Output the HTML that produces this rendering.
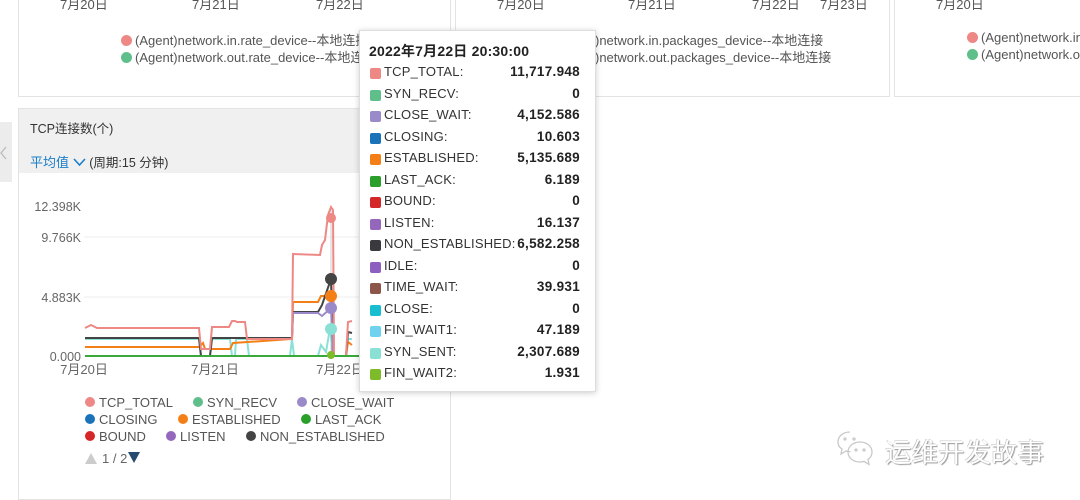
<!DOCTYPE html>
<html><head><meta charset="utf-8"><style>
*{margin:0;padding:0;box-sizing:border-box}
body{width:1080px;height:497px;background:#fff;position:relative;overflow:hidden;font-family:"Liberation Sans","Noto Sans CJK SC",sans-serif;color:#333}
.a{position:absolute;white-space:nowrap}
.panel{position:absolute;border:1px solid #e3e3e3;background:#fff}
.g{color:#555;font-size:13px}
.dot{display:inline-block;width:11px;height:11px;border-radius:50%;vertical-align:-1px;margin-right:3px}
.tt{position:absolute;left:359px;top:30px;width:237px;height:362px;background:#fff;border:1px solid #ddd;box-shadow:0 1px 6px rgba(0,0,0,.2);font-size:13px}
.row{position:absolute;left:10px;right:15px;height:18px}
.row i{position:absolute;left:0;top:5px;width:11px;height:11px;border-radius:2px}
.row span{position:absolute;left:14px;top:1px;color:#333;letter-spacing:0.2px}
.row b{position:absolute;right:0;top:1px;color:#222;font-size:13.5px;letter-spacing:0.3px;line-height:16px}
.row span{line-height:16px}
</style></head><body>
<div class="panel" style="left:18px;top:-2px;width:433px;height:99px"></div>
<div class="panel" style="left:455px;top:-2px;width:435px;height:99px"></div>
<div class="panel" style="left:894px;top:-2px;width:190px;height:99px"></div>
<div class="a g" style="left:60px;top:-6px">7月20日</div>
<div class="a g" style="left:192px;top:-6px">7月21日</div>
<div class="a g" style="left:316px;top:-6px">7月22日</div>
<div class="a g" style="left:497px;top:-6px">7月20日</div>
<div class="a g" style="left:628px;top:-6px">7月21日</div>
<div class="a g" style="left:752px;top:-6px">7月22日</div>
<div class="a g" style="left:820px;top:-6px">7月23日</div>
<div class="a g" style="left:936px;top:-6px">7月20日</div>
<div class="a g" style="left:121px;top:30px"><span class="dot" style="background:#ee8885"></span>(Agent)network.in.rate_device--本地连接</div>
<div class="a g" style="left:121px;top:47px"><span class="dot" style="background:#5fbf8a"></span>(Agent)network.out.rate_device--本地连接</div>
<div class="a g" style="left:595px;top:30px">)network.in.packages_device--本地连接</div>
<div class="a g" style="left:595px;top:47px">)network.out.packages_device--本地连接</div>
<div class="a g" style="left:967px;top:30px"><span class="dot" style="background:#ee8885"></span>(Agent)network.in</div>
<div class="a g" style="left:967px;top:47px"><span class="dot" style="background:#5fbf8a"></span>(Agent)network.out</div>

<div style="position:absolute;left:0;top:122px;width:12px;height:60px;background:#ececec"></div>
<svg style="position:absolute;left:0;top:146px" width="8" height="14"><path d="M6 1L1 7l5 6" stroke="#bbb" stroke-width="1.3" fill="none"/></svg>
<div class="panel" style="left:18px;top:108px;width:433px;height:392px"></div>
<div style="position:absolute;left:19px;top:109px;width:431px;height:64px;background:#f0f0f0"></div>
<div class="a" style="left:30px;top:118px;font-size:12.5px;color:#333">TCP连接数(个)</div>
<div class="a" style="left:30px;top:152px;font-size:13px;color:#1a7dc8">平均值 <svg width="13" height="9" viewBox="0 0 13 9"><path d="M1 1l5.5 6 5.5-6" stroke="#1a7dc8" stroke-width="1.6" fill="none"/></svg> <span style="color:#333;font-size:12.5px">(周期:15 分钟)</span></div>

<svg style="position:absolute;left:0;top:0" width="452" height="497">
<g stroke="#eee" stroke-width="1"><line x1="84" y1="237" x2="450" y2="237"/><line x1="84" y1="297" x2="450" y2="297"/></g>
<g font-size="12.5" fill="#666" text-anchor="end" font-family="Liberation Sans"><text x="81" y="211">12.398K</text><text x="81" y="242">9.766K</text><text x="81" y="302">4.883K</text><text x="81" y="361">0.000</text></g>
<g font-size="13" fill="#666" text-anchor="middle" font-family="Liberation Sans,Noto Sans CJK SC"><text x="84" y="374">7月20日</text><text x="215" y="374">7月21日</text><text x="340" y="374">7月22日</text></g>
<line x1="331" y1="210" x2="331" y2="356" stroke="#ccc"/>
<g fill="none" stroke-width="2">
<polyline stroke="#8be0d6" points="85,339 199,339 201,356 210,356 212,339 230,339 232,356 235,356 236,339 247,339 249,356 290,356 292,339 294,356 318,356 321,345 326,352 330,328 333,356 346,356 348,339 352,339"/>
<polyline stroke="#f47f16" points="85,347 199,347 203,343 205,349 230,349 233,343 292,339 293,302 318,302 321,296 331,296 333,356 346,356 348,342 352,345"/>
<polyline stroke="#444" points="85,338 199,338 201,356 210,356 212,338 292,338 293,312 318,312 322,305 331,279 333,356 346,356 348,332 352,333"/>
<polyline stroke="#9b8ac9" points="292,338 293,313 318,313 322,316 331,308 333,356"/>
<polyline stroke="#ee8885" points="85,328 91,325 97,328 199,328 201,349 210,349 212,327 229,327 232,321 235,321 237,322 245,322 247,339 292,339 293,254 320,255 322,245 325,240 328,215 331,207 333,210 334,356 346,356 348,322 352,321"/>
<polyline stroke="#3aa83a" points="85,356 450,356"/>
</g>
<g><circle cx="331" cy="218" r="5" fill="#ee8885"/><circle cx="331" cy="279" r="6" fill="#444"/><circle cx="331" cy="296" r="6" fill="#f47f16"/><circle cx="331" cy="308" r="6" fill="#9b8ac9"/><circle cx="331" cy="329" r="6" fill="#8be0d6"/><circle cx="331" cy="355" r="4" fill="#7dbb2a"/></g>
<g font-size="13" fill="#555" font-family="Liberation Sans">
<circle cx="90" cy="402" r="5" fill="#ee8885"/><text x="99" y="407">TCP_TOTAL</text>
<circle cx="198" cy="402" r="5" fill="#5fbf8a"/><text x="207" y="407">SYN_RECV</text>
<circle cx="302" cy="402" r="5" fill="#9b8ac9"/><text x="311" y="407">CLOSE_WAIT</text>
<circle cx="90" cy="419" r="5" fill="#1a73b8"/><text x="99" y="424">CLOSING</text>
<circle cx="183" cy="419" r="5" fill="#f47f16"/><text x="192" y="424">ESTABLISHED</text>
<circle cx="306" cy="419" r="5" fill="#2aa02a"/><text x="315" y="424">LAST_ACK</text>
<circle cx="90" cy="436" r="5" fill="#d62728"/><text x="99" y="441">BOUND</text>
<circle cx="171" cy="436" r="5" fill="#9467bd"/><text x="180" y="441">LISTEN</text>
<circle cx="251" cy="436" r="5" fill="#444"/><text x="260" y="441">NON_ESTABLISHED</text>
<path d="M85 464l6-11 6 11z" fill="#ccc"/><text x="102" y="463" fill="#666">1 / 2</text><path d="M128 452h12l-6 11z" fill="#244a6e"/>
</g>
</svg>

<div class="tt">
<div class="a" style="left:9px;top:10px;font-weight:bold;font-size:14px;color:#222;letter-spacing:0.2px">2022年7月22日 20:30:00</div>
<div class="row" style="top:32px"><i style="background:#ee8885"></i><span>TCP_TOTAL:</span><b>11,717.948</b></div>
<div class="row" style="top:53.5px"><i style="background:#5fbf8a"></i><span>SYN_RECV:</span><b>0</b></div>
<div class="row" style="top:75px"><i style="background:#9b8ac9"></i><span>CLOSE_WAIT:</span><b>4,152.586</b></div>
<div class="row" style="top:96.5px"><i style="background:#1a73b8"></i><span>CLOSING:</span><b>10.603</b></div>
<div class="row" style="top:118px"><i style="background:#f47f16"></i><span>ESTABLISHED:</span><b>5,135.689</b></div>
<div class="row" style="top:139.5px"><i style="background:#2aa02a"></i><span>LAST_ACK:</span><b>6.189</b></div>
<div class="row" style="top:161px"><i style="background:#d62728"></i><span>BOUND:</span><b>0</b></div>
<div class="row" style="top:182.5px"><i style="background:#9467bd"></i><span>LISTEN:</span><b>16.137</b></div>
<div class="row" style="top:204px"><i style="background:#3a3a3e"></i><span>NON_ESTABLISHED:</span><b>6,582.258</b></div>
<div class="row" style="top:225.5px"><i style="background:#8c5fc0"></i><span>IDLE:</span><b>0</b></div>
<div class="row" style="top:247px"><i style="background:#8c564b"></i><span>TIME_WAIT:</span><b>39.931</b></div>
<div class="row" style="top:268.5px"><i style="background:#17becf"></i><span>CLOSE:</span><b>0</b></div>
<div class="row" style="top:290px"><i style="background:#6fd3f0"></i><span>FIN_WAIT1:</span><b>47.189</b></div>
<div class="row" style="top:311.5px"><i style="background:#8be0d6"></i><span>SYN_SENT:</span><b>2,307.689</b></div>
<div class="row" style="top:333px"><i style="background:#7dbb2a"></i><span>FIN_WAIT2:</span><b>1.931</b></div>
</div>

<svg style="position:absolute;left:836px;top:430px" width="46" height="36" viewBox="0 0 46 36" fill="none" stroke="#c8c8c8" stroke-width="1.3">
<path d="M14 2C6 2 2 7 2 12c0 3 1.5 5.5 4 7l-1 5 5-3c1.5.5 3 .7 4.5.6"/>
<path d="M24 12c-7 0-12 4.5-12 10s5 10 12 10c1.5 0 3-.2 4-.6l5 3-1-5c2.5-1.8 4-4.5 4-7.4 0-5.5-5-10-12-10z"/>
<circle cx="9" cy="9" r="1"/><circle cx="18" cy="9" r="1"/><circle cx="20" cy="20" r="1"/><circle cx="28" cy="20" r="1"/>
</svg>
<div class="a" style="left:885px;top:431px;font-size:26.5px;color:#fff;font-family:'Noto Sans CJK SC',sans-serif;text-shadow:1px 1px 1px #999,-0.5px -0.5px 0 #bbb">运维开发故事</div>
</body></html>
